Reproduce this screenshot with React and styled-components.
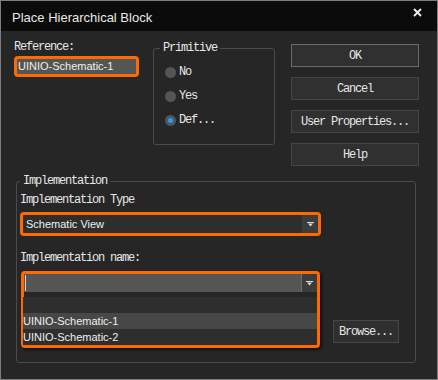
import styled, { createGlobalStyle } from "styled-components";

const GlobalStyle = createGlobalStyle`
  html, body { margin: 0; padding: 0; background: #262626; }
  * { box-sizing: border-box; }
`;

const mono = `"Liberation Mono", "DejaVu Sans Mono", monospace`;
const sans = `"Liberation Sans", Arial, sans-serif`;
const orange = "#ff6a00";

function App() {
	return (
		<>
			<GlobalStyle />
			<Win>
				<TitleBar>
					<Title>Place Hierarchical Block</Title>
					<Close>
						<svg width='9' height='9' viewBox='0 0 9 9'>
							<path d='M1 1L8 8M8 1L1 8' stroke='#f2f2f2' strokeWidth='1.8' />
						</svg>
					</Close>
				</TitleBar>

				<Body>
					<TopRow>
						<RefCol>
							<Label>Reference:</Label>
							<RefInput>UINIO-Schematic-1</RefInput>
						</RefCol>

						<Primitive>
							<Legend>Primitive</Legend>
							<RadioList>
								{["No", "Yes", "Def..."].map((item) => (
									<RadioRow key={item}>
										<Radio $checked={item === "Def..."} />
										<Label>{item}</Label>
									</RadioRow>
								))}
							</RadioList>
						</Primitive>

						<Buttons>
							<Btn $primary>OK</Btn>
							<Btn>Cancel</Btn>
							<Btn>User Properties...</Btn>
							<Btn>Help</Btn>
						</Buttons>
					</TopRow>

					<Impl>
						<Legend>Implementation</Legend>
						<Label>Implementation Type</Label>
						<TypeSelect>
							<SelectText>Schematic View</SelectText>
							<DropBtn>
								<Arrow />
							</DropBtn>
						</TypeSelect>

						<NameLabel>Implementation name:</NameLabel>
						<NameRow>
							<Combo>
								<ComboInput>
									<Caret />
									<DropBtn $split>
										<Arrow />
									</DropBtn>
								</ComboInput>
								<List>
									<Item />
									<Item $active>UINIO-Schematic-1</Item>
									<Item>UINIO-Schematic-2</Item>
								</List>
							</Combo>
							<BrowseBtn>Browse...</BrowseBtn>
						</NameRow>
					</Impl>
				</Body>
			</Win>
		</>
	);
}

function Arrow() {
	return (
		<svg width='7' height='5' viewBox='0 0 7 5'>
			<rect x='0' y='0' width='7' height='1' fill='#d8d8d8' />
			<path d='M1 1.5H6L3.5 4.5Z' fill='#d8d8d8' />
		</svg>
	);
}

export default App;

const Win = styled.div`
	width: 438px;
	height: 380px;
	border: 1px solid #7d7d7d;
	background: #262626;
	display: flex;
	flex-direction: column;
	overflow: hidden;
`;

const TitleBar = styled.div`
	height: 30px;
	flex-shrink: 0;
	background: #0b0b0b;
	display: flex;
	align-items: center;
	justify-content: space-between;
	padding: 2px 12px 0 11px;
`;

const Title = styled.span`
	font-family: ${sans};
	font-size: 13px;
	color: #e8e8e8;
`;

const Close = styled.span`
	display: flex;
	margin-top: -9px;
	margin-right: 3px;
`;

const Body = styled.div`
	padding: 9px 0 0 13px;
	display: flex;
	flex-direction: column;
`;

const TopRow = styled.div`
	display: flex;
	align-items: flex-start;
`;

const Label = styled.span`
	font-family: ${mono};
	font-size: 12px;
	letter-spacing: -1.2px;
	line-height: 14px;
	color: #e6e6e6;
	white-space: pre;
`;

const RefCol = styled.div`
	width: 125px;
	display: flex;
	flex-direction: column;
	gap: 2px;
`;

const RefInput = styled.div`
	height: 21px;
	border: 3px solid ${orange};
	border-radius: 4px;
	background: #555555;
	font-family: ${sans};
	font-size: 11px;
	line-height: 15px;
	color: #f0f0f0;
	padding-left: 1px;
`;

const Legend = styled.legend`
	font-family: ${mono};
	font-size: 12px;
	letter-spacing: -1.2px;
	line-height: 14px;
	color: #e6e6e6;
	padding: 0 3px 0 3px;
`;

const Primitive = styled.fieldset`
	margin: 1px 0 0 14px;
	width: 122px;
	height: 104px;
	border: 1px solid #4b4b4b;
	border-radius: 3px;
	padding: 0 0 0 6px;
	min-width: 0;
`;

const RadioList = styled.div`
	display: flex;
	flex-direction: column;
	gap: 10px;
	padding: 10px 0 0 5px;
`;

const RadioRow = styled.div`
	display: flex;
	align-items: center;
	gap: 3px;
	height: 14px;
`;

const Radio = styled.span`
	width: 11px;
	height: 11px;
	border-radius: 50%;
	background: #555;
	display: flex;
	align-items: center;
	justify-content: center;

	&::after {
		content: "";
		width: 5px;
		height: 5px;
		border-radius: 50%;
		background: ${(p) => (p.$checked ? "#1aa0ff" : "transparent")};
	}
`;

const Buttons = styled.div`
	margin: 4px 0 0 16px;
	width: 128px;
	display: flex;
	flex-direction: column;
	gap: 10px;
`;

const Btn = styled.div`
	height: 23px;
	background: #303030;
	border: 1px solid ${(p) => (p.$primary ? "#6a6a6a" : "#454545")};
	display: flex;
	align-items: center;
	justify-content: center;
	font-family: ${mono};
	font-size: 12px;
	letter-spacing: -1.2px;
	color: #e6e6e6;
	white-space: pre;
`;

const Impl = styled.fieldset`
	margin: 8px 0 0 2px;
	width: 400px;
	height: 189px;
	border: 1px solid #4b4b4b;
	border-radius: 3px;
	padding: 5px 0 0 3px;
	min-width: 0;
	display: flex;
	flex-direction: column;
	align-items: flex-start;
`;

const TypeSelect = styled.div`
	margin-top: 5px;
	width: 301px;
	height: 24px;
	border: 3px solid ${orange};
	border-radius: 4px;
	background: #2e2e2e;
	display: flex;
	align-items: stretch;
`;

const SelectText = styled.span`
	flex: 1;
	font-family: ${sans};
	font-size: 11px;
	line-height: 18px;
	color: #f0f0f0;
	padding-left: 3px;
`;

const DropBtn = styled.span`
	width: 16px;
	background: #3c3c3c;
	border-left: ${(p) => (p.$split ? "1px solid #6e6e6e" : "none")};
	display: flex;
	align-items: center;
	justify-content: center;
`;

const NameLabel = styled(Label)`
	margin-top: 15px;
`;

const NameRow = styled.div`
	margin-top: 6px;
	display: flex;
	align-items: flex-end;
	gap: 13px;
`;

const Combo = styled.div`
	margin-left: 1px;
	width: 299px;
	border: 3px solid ${orange};
	border-radius: 4px;
	background: #262626;
	box-shadow: 2px 2px 3px rgba(0, 0, 0, 0.55);
	display: flex;
	flex-direction: column;
`;

const ComboInput = styled.div`
	height: 18px;
	background: #555555;
	display: flex;
	justify-content: space-between;
`;

const Caret = styled.span`
	width: 1px;
	margin: 1px 0 1px 1px;
	background: #cfcfcf;
`;

const List = styled.div`
	margin-top: 5px;
	display: flex;
	flex-direction: column;
`;

const Item = styled.div`
	height: 16px;
	background: ${(p) => (p.$active ? "#474747" : "#2e2e2e")};
	font-family: ${sans};
	font-size: 11px;
	line-height: 16px;
	color: #f0f0f0;
	margin-left: -1px;
`;

const BrowseBtn = styled.div`
	margin-bottom: 5px;
	width: 66px;
	height: 23px;
	background: #2f2f2f;
	border: 1px solid #464646;
	display: flex;
	align-items: center;
	padding-left: 5px;
	font-family: ${mono};
	font-size: 12px;
	letter-spacing: -1.2px;
	color: #e6e6e6;
	white-space: pre;
`;
